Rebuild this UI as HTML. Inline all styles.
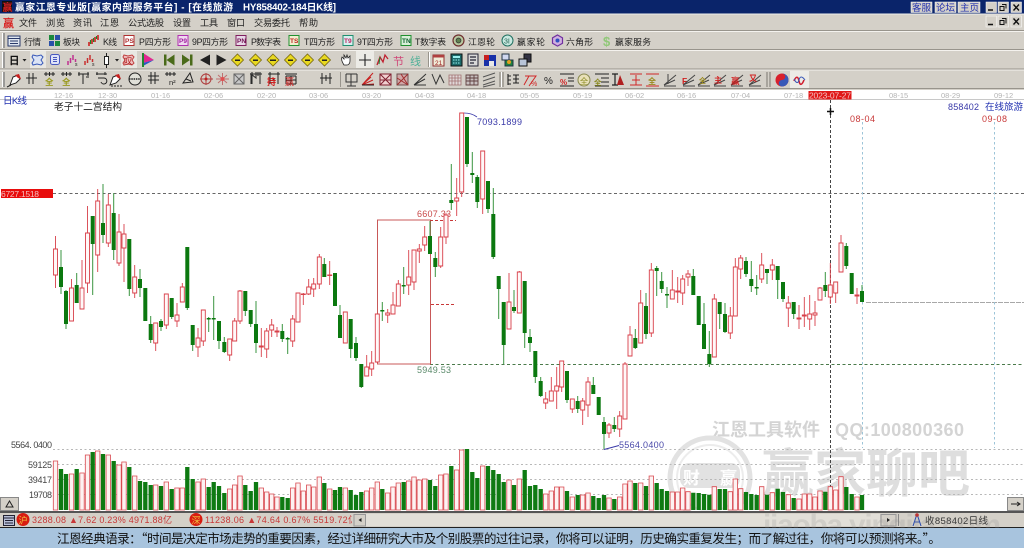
<!DOCTYPE html>
<html lang="zh"><head><meta charset="utf-8"><title>赢家江恩专业版</title>
<style>
html,body{margin:0;padding:0;background:#fff;width:1024px;height:548px;overflow:hidden}
svg{display:block;position:absolute;left:0;top:0;filter:blur(.3px)}
text{font-family:"Liberation Sans","WenQuanYi Zen Hei","Noto Sans CJK SC",sans-serif}
.m{font-size:9.2px;fill:#222}
.t{font-size:8.8px;fill:#222}
.a{font-size:7.5px;fill:#b4b4b4}
.l{font-size:9px;fill:#444}
.g{fill:none;stroke:#222;stroke-width:1}
</style></head><body>
<svg width="1024" height="548" viewBox="0 0 1024 548">
<!-- chrome backgrounds -->
<rect width="1024" height="90" fill="#d4d0c8"/>
<rect width="1024" height="13.5" fill="#0a246a"/>
<rect y="13.5" width="1024" height="1" fill="#eeeeea"/>
<path d="M0 30.5H1024M0 49.5H1024M0 69H1024M0 88.5H1024" stroke="#98948c" stroke-width="1"/>
<path d="M0 31.5H1024M0 50.5H1024M0 70H1024" stroke="#f4f2ee" stroke-width="1"/>
<rect y="90" width="1024" height="421" fill="#fff"/>
<!-- title -->
<rect x="2" y="1" width="10" height="11" fill="#111"/>
<text x="2.5" y="11" font-size="10" fill="#e02020" font-weight="bold">赢</text>
<text x="15" y="10.500" font-size="9.800" fill="#fff" font-weight="bold" textLength="218">赢家江恩专业版[赢家内部服务平台] - [在线旅游</text>
<text x="243" y="10.500" font-size="9.800" fill="#fff" font-weight="bold" textLength="93">HY858402-184日K线]</text>
<g fill="#d4d0c8" stroke="#fff" stroke-width=".5">
<rect x="911" y="2" width="21" height="10.500"/><rect x="935" y="2" width="21" height="10.500"/><rect x="958" y="2" width="22" height="10.500"/>
<rect x="986" y="2" width="10.500" height="10.500"/><rect x="998" y="2" width="10.500" height="10.500"/><rect x="1011" y="2" width="10.500" height="10.500"/>
<rect x="986" y="16" width="10.500" height="11"/><rect x="998" y="16" width="10.500" height="11"/><rect x="1011" y="16" width="10.500" height="11"/>
</g>
<text x="912" y="11" font-size="9.500" fill="#2030b0" textLength="19">客服</text>
<text x="936" y="11" font-size="9.500" fill="#2030b0" textLength="19">论坛</text>
<text x="960" y="11" font-size="9.500" fill="#2030b0" textLength="19">主页</text>
<path d="M988 10h5M988 24.500h5" stroke="#111" stroke-width="1.500"/>
<path d="M1002 4.500h4v4M1000 6.500h4v4h-4zM1002 18.500h4v5M1000 20.500h4v4h-4z" fill="none" stroke="#111"/>
<path d="M1013.500 4.500l5.500 6M1019 4.500l-5.500 6M1013.500 18.500l5.500 6M1019 18.500l-5.500 6" stroke="#111" stroke-width="1.400"/>
<!-- menu -->
<text x="3" y="27" font-size="11" fill="#d82020" font-weight="bold">赢</text>
<text class="m" x="19" y="26" textLength="18">文件</text>
<text class="m" x="46" y="26" textLength="19">浏览</text>
<text class="m" x="73" y="26" textLength="19">资讯</text>
<text class="m" x="100" y="26" textLength="19">江恩</text>
<text class="m" x="128" y="26" textLength="36">公式选股</text>
<text class="m" x="173" y="26" textLength="18">设置</text>
<text class="m" x="200" y="26" textLength="18">工具</text>
<text class="m" x="227" y="26" textLength="18">窗口</text>
<text class="m" x="254" y="26" textLength="36">交易委托</text>
<text class="m" x="299" y="26" textLength="19">帮助</text>
<!-- grips -->
<path d="M4 33v15M4 52v16M4 72v15M4 33" stroke="#888" stroke-width="1.500"/>
<path d="M2.500 33v15M2.500 52v16M2.500 72v15" stroke="#fff" stroke-width="1"/>
<!-- toolbar 1 -->
<rect x="8" y="36" width="12" height="10" fill="#dfe6f0" stroke="#2a3a6a"/><path d="M8 38.500h12M10 41h8M10 43.500h8" stroke="#2a3a6a"/>
<text class="t" x="24" y="45" textLength="17">行情</text>
<rect x="49" y="35" width="5" height="5" fill="#1c8a3c"/><rect x="55" y="35" width="5" height="5" fill="#2a50a8"/><rect x="49" y="41" width="5" height="5" fill="#2a50a8"/><rect x="55" y="41" width="5" height="5" fill="#1c8a3c"/>
<text class="t" x="63" y="45" textLength="17">板块</text>
<path d="M89 46v-4M92 44v-5M95 42v-5M98 40v-5" stroke="#d02020" stroke-width="1.600"/><path d="M90.500 44v-4M93.500 42v-4M96.500 39v-3" stroke="#1a8a2a" stroke-width="1.200"/>
<text class="t" x="103" y="45" textLength="14">K线</text>
<g font-size="6.500" font-weight="bold" stroke-width="1">
<rect x="124" y="35.500" width="10" height="10" fill="#fff" stroke="#b03030"/><text x="125" y="43" fill="#b03030">PS</text>
<rect x="178" y="35.500" width="10" height="10" fill="#f0d8f0" stroke="#b030b0"/><text x="179" y="43" fill="#a020a0">P9</text>
<rect x="236" y="35.500" width="10" height="10" fill="#e8d8e8" stroke="#802060"/><text x="237" y="43" fill="#701050">PN</text>
<rect x="289" y="35.500" width="10" height="10" fill="#f0f0d0" stroke="#209030"/><text x="290" y="43" fill="#c02020">TS</text>
<rect x="343" y="35.500" width="10" height="10" fill="#d8f0f0" stroke="#209070"/><text x="344" y="43" fill="#c02060">T9</text>
<rect x="401" y="35.500" width="10" height="10" fill="#d8f0d8" stroke="#209030"/><text x="402" y="43" fill="#106030">TN</text>
</g>
<text class="t" x="139" y="45" textLength="32">P四方形</text>
<text class="t" x="192" y="45" textLength="36">9P四方形</text>
<text class="t" x="251" y="45" textLength="30">P数字表</text>
<text class="t" x="304" y="45" textLength="31">T四方形</text>
<text class="t" x="357" y="45" textLength="36">9T四方形</text>
<text class="t" x="415" y="45" textLength="31">T数字表</text>
<circle cx="458.500" cy="40.500" r="5.500" fill="#b8c8a0" stroke="#703030" stroke-width="1.200"/><circle cx="458.500" cy="40.500" r="2.500" fill="#608050" stroke="#333" stroke-width=".7"/>
<text class="t" x="468" y="45" textLength="27">江恩轮</text>
<circle cx="507.500" cy="40.500" r="5.500" fill="#c8e8e0" stroke="#207060"/><text x="504" y="43.500" font-size="7" fill="#206050">3I</text>
<text class="t" x="517" y="45" textLength="28">赢家轮</text>
<path d="M557.500 35l5 2.800v5.500l-5 2.800-5-2.800v-5.500z" fill="#d0b0e0" stroke="#7030a0" stroke-width="1.200"/><circle cx="557.500" cy="40.500" r="2" fill="#3050c0"/>
<text class="t" x="566" y="45" textLength="27">六角形</text>
<text x="603" y="46" font-size="13" font-weight="bold" fill="#90c878">$</text>
<text class="t" x="615" y="45" textLength="36">赢家服务</text>
<!-- toolbar 2 -->
<text x="9" y="64" font-size="10.500" font-weight="bold" fill="#111">日</text>
<path d="M22.500 59h4l-2 2.500zM115 59h4l-2 2.500z" fill="#222"/>
<rect x="30" y="51" width="16" height="17" fill="#e8e7e2"/>
<path d="M33 55l4 1 4-1 2 2-2 3 2 3-2 2-4-1-4 1-1-2 2-3-2-3z" fill="#dbe4f5" stroke="#3858b8"/>
<rect x="50.500" y="54.500" width="9" height="10" rx="2" fill="#e0e4f8" stroke="#4858c0"/><path d="M53 57.500h4M53 59.500h4M53 61.500h4" stroke="#4858c0"/>
<path d="M68 65v-4M70.500 63v-5M73 60v-5M75.500 62v-3" stroke="#c03090" stroke-width="1.500"/><text x="75" y="66" font-size="5" fill="#222">s</text>
<path d="M85 65v-4M87.500 63v-5M90 60v-5M92.500 62v-3" stroke="#c83030" stroke-width="1.500"/><text x="92" y="66" font-size="5" fill="#222">s</text>
<path d="M106.500 53v15" stroke="#222"/><rect x="104.500" y="56.500" width="4" height="8" fill="#fff" stroke="#222"/>
<rect x="121" y="51" width="16" height="17" fill="#e8e7e2"/>
<path d="M124 55l4 1 4-1 2 2-2 3 2 3-2 2-4-1-4 1-1-2 2-3-2-3z" fill="#f0c0c0" stroke="#c04040"/><text x="124" y="64" font-size="8.500" fill="#b02020">叹</text>
<path d="M143 53l11 7-11 3z" fill="#e02890"/><path d="M143 63l11-3-11 6z" fill="#2858c8"/><path d="M143 53v14" stroke="#208830" stroke-width="2"/>
<g fill="#4a6a1a"><path d="M164 54.500h2.500v11H164zM166.500 60l8-5.500v11z"/><path d="M190 54.500h2.500v11H190zM190 60l-8-5.500v11z"/></g>
<g fill="#222"><path d="M210 54.500v11l-10-5.500z"/><path d="M216.500 54.500v11l10-5.500z"/></g>
<g fill="#e8d820" stroke="#786810" stroke-width=".8"><path d="M237.500 54l6 6-6 6-6-6z"/><path d="M255.500 54l6 6-6 6-6-6z"/><path d="M273 54l6 6-6 6-6-6z"/><path d="M290.500 54l6 6-6 6-6-6z"/><path d="M307.500 54l6 6-6 6-6-6z"/><path d="M324.500 54l6 6-6 6-6-6z"/></g>
<g fill="#222"><path d="M235 59.500h5v1.500h-5zM253 59.500h5v1.500h-5zM270 59.500h6v1.500h-6zM288 59.500h5v1.500h-5zM305 59.500h5v1.500h-5zM322 59.500h5v1.500h-5z"/></g>
<path d="M344 65c-2-3-3-6-2-8l2 2v-4l2 3 1-3 1 3 2-2v5c0 3-2 4-3 4z" fill="#fff" stroke="#222" stroke-width=".8"/>
<rect x="356" y="51" width="18" height="17" fill="#ecebe6"/>
<path d="M359 60h12M365 54v12" stroke="#222" stroke-width="1.100"/>
<path d="M377 65l3-8 3 5 2-7 3 4" fill="none" stroke="#c02030" stroke-width="1.300"/><path d="M380 57l-1 7" stroke="#208030"/>
<text x="393" y="65" font-size="11" fill="#d04878">节</text>
<text x="410" y="65" font-size="11" fill="#50b098">线</text>
<path d="M428.500 52v15" stroke="#98948c"/><path d="M429.500 52v15" stroke="#fff"/>
<rect x="433" y="55" width="11" height="11" fill="#f0ecd8" stroke="#903030"/><rect x="433" y="55" width="11" height="2.500" fill="#b04040"/><text x="435" y="65" font-size="6.500" fill="#a02020">21</text>
<rect x="451" y="54" width="11" height="12" fill="#1c6a6a" stroke="#111"/><path d="M453 57h7" stroke="#9ee" stroke-width="2"/><path d="M453 60h7M453 63h7" stroke="#9ee" stroke-dasharray="1.500 1"/>
<rect x="468" y="54" width="10" height="12" fill="#d8d8d8" stroke="#223"/><path d="M470 57h6M470 60h6M470 63h4" stroke="#223" stroke-width="1.200"/>
<rect x="484" y="55" width="12" height="11" fill="#1830a8"/><rect x="484" y="55" width="5" height="5" fill="#c82020"/><rect x="489" y="61" width="5" height="5" fill="#e8e8e8"/>
<rect x="502" y="54" width="7" height="6" fill="#d0d8f0" stroke="#234"/><rect x="505" y="60" width="8" height="6" fill="#208040" stroke="#234"/><circle cx="509" cy="62" r="2" fill="#e0a020"/>
<rect x="524" y="54" width="7" height="8" fill="#334" stroke="#111"/><rect x="519" y="59" width="8" height="7" fill="#b8c4d8" stroke="#111"/>
<!-- toolbar 3 -->
<path d="M10 85l3-8 5-2 2 4-4 4z" fill="#fff" stroke="#222"/><path d="M15 75l4-1 2 5-3-1z" fill="#c82020"/><path d="M7 87l4-2" stroke="#222"/>
<g class="g">
<path d="M26 78h11M29 73v11M33 73v11"/>
<path d="M44 74h11M46 72v4M49.500 72v4M53 72v4"/><path d="M61 74h11M63 72v4M66.500 72v4M70 72v4"/>
<path d="M78 74h11M83 74v10M86 77h3M79 72v4M88 72v4"/>
<path d="M96 74h11M97 72v3M105 72v3M98 78h6a3 3 0 1 1-3 4"/>
<path d="M130 80h7"/>
<path d="M148 76h11M151 72v12M155 72v12M148 80h11"/>
<path d="M165 74h11M167 72v4M170 72v4M174 72v4"/>
<path d="M183 83l7-10 3 9zM186 79l5 2"/>
<path d="M250 74h12M252 72v4M256 72v4M260 72v4M252 76v8M260 76v8"/>
<path d="M268 74h12M270 72v12M278 72v12M274 78v6"/>
<path d="M285 74h12M286 76h10M286 76v8M296 76v8M291 76v8M286 80h10M286 84h10"/>
<path d="M320 78h12M322 73v11M330 73v11M326 75v6"/>
</g>
<text x="45" y="85" font-size="8.500" fill="#9a9a20" font-weight="bold">全</text>
<text x="62" y="85" font-size="8.500" fill="#9a9a20" font-weight="bold">全</text>
<text x="169" y="85" font-size="7.500" fill="#222">n²</text>
<path d="M110 85l3-8 5-2 2 4-4 4z" fill="#fff" stroke="#222"/><path d="M115 75l4-1 2 5-3-1z" fill="#c82020"/><path d="M111 86h12" stroke="#222" stroke-dasharray="2 1"/>
<circle cx="135" cy="79" r="6" fill="#e0e0d8" stroke="#222"/><path d="M129 79h12" stroke="#222" stroke-width="1.500" stroke-dasharray="1.500 .8"/>
<circle cx="206" cy="79" r="5" fill="none" stroke="#b04040"/><path d="M200 79h13M206 73v12" stroke="#b04040"/><circle cx="206" cy="79" r="1.500" fill="#c02020"/>
<path d="M216 79h13M222.500 73v12M218 75l9 8M227 75l-9 8" stroke="#c07070"/><circle cx="222.500" cy="79" r="2" fill="#e05050"/>
<rect x="234" y="74" width="10" height="10" fill="#c8c8c8" stroke="#666"/><path d="M234 74l10 10M244 74l-10 10" stroke="#666"/>
<path d="M251 84v-10l5 4v-5M258 72v4M260 72v4" fill="none" stroke="#333" stroke-width="1.100"/>
<text x="267" y="85" font-size="9" fill="#d02020" font-weight="bold">持</text>
<text x="285" y="85" font-size="9" fill="#d02020">赢</text>
<!-- group 2 -->
<path d="M340.500 72v15" stroke="#98948c"/>
<path d="M346 74h11M346 74v8h11v-8M351 74v12M347 86h9" fill="none" stroke="#333"/>
<path d="M362 85l11-12M362 85l9-8M362 85l11-5M362 85l12-1" stroke="#c82020"/><path d="M362 85h12" stroke="#222"/>
<rect x="380" y="74" width="11" height="11" fill="#f0d0d0" stroke="#802030"/><path d="M380 74l11 11M391 74l-11 11M380 80h11" stroke="#802030"/>
<rect x="397" y="74" width="11" height="11" fill="#d0a8a8" stroke="#705050"/><path d="M397 78l11 7M401 74l7 11M397 85l11-11" stroke="#a03030"/>
<path d="M414 85l12-11M414 85l11-6M414 85h12" stroke="#333" fill="none"/>
<path d="M432 74l4 10 4-9 4 8" stroke="#333" fill="none"/>
<path d="M449 75h12v10h-12zM449 78h12M449 81h12M452 75v10M455 75v10M458 75v10" fill="#e0d8d8" stroke="#a07070" stroke-width=".8"/>
<path d="M466 75h12v10h-12zM466 78h12M466 81h12M470 75v10M474 75v10" fill="#c8c0c0" stroke="#604040" stroke-width=".9"/>
<path d="M483 77l12-4M483 81l12-4M483 85l12-4M483 87l12-3" stroke="#555"/>
<path d="M500 72v15" stroke="#8a867e" stroke-width="1.200"/><path d="M503 72v15" stroke="#8a867e" stroke-width="1.200"/>
<path d="M501.500 72v15" stroke="#fff"/>
<path d="M508 74v11M508 76h3M508 80h3M508 84h3M513 75h6M513 79h6M513 83h6M516 75v8" stroke="#222" stroke-width="1.100" fill="none"/>
<path d="M525 76h11l-7 10M524 85l5-9" stroke="#d02828" fill="none"/><text x="531" y="86" font-size="7" fill="#d02828">%</text>
<text x="544" y="84" font-size="10" fill="#222">%</text>
<path d="M560 74h14M560 86h14" stroke="#222"/><text x="560" y="85" font-size="8" fill="#d02828" font-weight="bold">%</text><path d="M568 78h6M568 81h6" stroke="#222"/>
<circle cx="584" cy="80" r="6" fill="#e8e0b8" stroke="#8a8a50"/><text x="580" y="84" font-size="8" fill="#8a8a20">全</text>
<path d="M595 74h14M601 78h8M601 82h8M595 86h14" stroke="#222"/><text x="594" y="85" font-size="7.500" fill="#8a8a20" font-weight="bold">全</text>
<path d="M615 74v11M612 74h6M612 85h6" stroke="#222" stroke-width="1.200"/><path d="M620 75l4 10h-7z" fill="#b02020"/>
<path d="M630 74h12M630 85h12M632 80h8M636 75v10" stroke="#d02828"/><path d="M630 85h12" stroke="#d02828"/>
<path d="M646 74h13M646 86h13" stroke="#d02828"/><text x="648" y="84" font-size="8" fill="#9a8a20" font-weight="bold">全</text>
<path d="M664 85l12-10M664 85l11-5M664 86h12M668 74v10" stroke="#444" fill="none"/>
<text x="682" y="84" font-size="8.500" fill="#d02020" font-weight="bold">F</text><path d="M683 85l12-10M683 85l11-5M683 86h12" stroke="#444" fill="none"/>
<path d="M698 85l12-10M698 85l11-5M698 86h12" stroke="#444" fill="none"/><text x="699" y="83" font-size="7" fill="#9a8a20" font-weight="bold">全</text>
<path d="M714 85l12-10M714 85l11-5M714 86h12" stroke="#444" fill="none"/><text x="714" y="83" font-size="8" fill="#d02020" font-weight="bold">主</text>
<path d="M731 85l12-10M731 85l11-5M731 86h12" stroke="#444" fill="none"/><text x="731" y="84" font-size="8.500" fill="#d02020" font-weight="bold">赢</text>
<path d="M749 85l12-10M749 85l11-5M749 86h12" stroke="#444" fill="none"/><text x="749" y="81" font-size="8" fill="#d02020" font-weight="bold">又</text>
<path d="M767 72v15M770 72v15" stroke="#8a867e" stroke-width="1.200"/>
<rect x="790" y="71" width="19" height="17" fill="#ecebe6"/>
<circle cx="782" cy="80" r="6.500" fill="#d8202c"/><path d="M782 73.500a3.200 3.200 0 0 1 0 6.500 3.200 3.200 0 0 0 0 6.500 6.500 6.500 0 0 0 0-13z" fill="#3858b8"/>
<path d="M794 81c2-5 4-5 5 0s3 4 5-1" fill="none" stroke="#d02030" stroke-width="1.600"/><path d="M794 79c2 4 4 5 5 1s3-4 6 0" fill="none" stroke="#3858b8" stroke-width="1"/>
<!-- axis -->
<path d="M0 99.500H1024" stroke="#c8c8c8"/>
<g class="a">
<text class="a" x="54" y="98">12-16</text><text class="a" x="98" y="98">12-30</text><text class="a" x="151" y="98">01-16</text><text class="a" x="204" y="98">02-06</text><text class="a" x="257" y="98">02-20</text><text class="a" x="309" y="98">03-06</text><text class="a" x="362" y="98">03-20</text><text class="a" x="415" y="98">04-03</text><text class="a" x="467" y="98">04-18</text><text class="a" x="520" y="98">05-05</text><text class="a" x="573" y="98">05-19</text><text class="a" x="625" y="98">06-02</text><text class="a" x="677" y="98">06-16</text><text class="a" x="731" y="98">07-04</text><text class="a" x="784" y="98">07-18</text><text class="a" x="889" y="98">08-15</text><text class="a" x="941" y="98">08-29</text><text class="a" x="994" y="98">09-12</text>
</g>
<rect x="808.500" y="91" width="43" height="8.500" fill="#e01818"/>
<text x="809" y="98.500" font-size="8.500" fill="#f4c0c0" textLength="42">2023-07-27</text>
<text x="3" y="104" font-size="9.500" fill="#2030b0" textLength="24">日K线</text>
<text x="54" y="110" font-size="9.700" fill="#222" textLength="68">老子十二宫结构</text>
<text x="948" y="110" font-size="9" fill="#3838a8" textLength="31">858402</text>
<text x="985" y="110" font-size="9.500" fill="#2030b0" textLength="38">在线旅游</text>
<text x="850" y="122" font-size="9" fill="#c83838" textLength="25">08-04</text>
<text x="982" y="122" font-size="9" fill="#c83838" textLength="25">09-08</text>
<!-- watermark -->
<text x="712" y="436" font-size="18" font-weight="bold" fill="#d4d4d4" textLength="108">江恩工具软件</text>
<text x="835" y="436" font-size="18" font-weight="bold" fill="#d4d4d4" textLength="129">QQ:100800360</text>
<circle cx="710" cy="478" r="40" fill="none" stroke="#e2e2e2" stroke-width="5"/><circle cx="710" cy="478" r="33" fill="none" stroke="#ececec" stroke-width="2"/>
<rect x="680" y="463" width="60" height="25" rx="9" fill="#e2e2e2"/>
<text x="683" y="484" font-size="17" font-weight="bold" fill="#fff" textLength="54">财赢</text>
<text x="762" y="492" font-size="52" font-weight="bold" fill="#dedede" textLength="208">赢家聊吧</text>
<!-- guide lines -->
<path d="M53 193.500H1024" stroke="#666" stroke-dasharray="3 2.500"/>
<path d="M430 364.500H1024" stroke="#4a7a4a" stroke-dasharray="3 2.500"/>
<path d="M866 302.500H1024" stroke="#a8a8a8" stroke-dasharray="5 1"/>
<path d="M53 449.500H1024M53 464.500H1024M53 479.500H1024M53 494.500H1024" stroke="#b8b8b8" stroke-dasharray="2 2.500"/>
<path d="M862.500 122V448M994.500 122V448" stroke="#9cc4d8" stroke-dasharray="2.500 2.500"/>
<path d="M830.500 100V510" stroke="#444" stroke-dasharray="3 2"/>
<path d="M827 111.500h7M830.500 108v7" stroke="#111" stroke-width="1.500"/>
<rect x="1" y="189" width="52" height="9" fill="#e80c0c"/>
<text x="1" y="197" font-size="8.500" fill="#f4c0c0" textLength="38">6727.1518</text>
<!-- structure box -->
<rect x="377.500" y="220" width="53" height="144" fill="none" stroke="#c85858"/>
<path d="M430 220.500h26M431 304.500h25" stroke="#c83838" stroke-dasharray="3 2"/>
<text x="417" y="217" font-size="9" fill="#c84848" textLength="34">6607.33</text>
<text x="417" y="373" font-size="9" fill="#5a8a6a" textLength="34">5949.53</text>
<path d="M464 113c5 0 9 1 13 4" fill="none" stroke="#3838a8" stroke-width=".8"/>
<text x="477" y="125" font-size="9" fill="#3838a8" textLength="45">7093.1899</text>
<path d="M604 449.500l15-4" fill="none" stroke="#3838a8"/>
<text x="619" y="448" font-size="9" fill="#4848a8" textLength="45">5564.0400</text>
<!-- left labels -->
<text class="l" x="11" y="448" textLength="41">5564. 0400</text>
<text class="l" x="28" y="468" textLength="24">59125</text>
<text class="l" x="28" y="483" textLength="24">39417</text>
<text class="l" x="29" y="498" textLength="23">19708</text>
<!-- volume red -->
<path fill="#fdf2f2" stroke="#d8484f" stroke-width=".8" d="M53.300 461h4.400V510h-4.400zM69.300 474h4.400V510h-4.400zM79.800 473h4.400V510h-4.400zM85.300 455h4.400V510h-4.400zM95.500 451h4.400V510h-4.400zM106.100 455h4.400V510h-4.400zM116.800 465h4.400V510h-4.400zM121.800 462h4.400V510h-4.400zM132.500 476h4.400V510h-4.400zM153.500 485h4.400V510h-4.400zM164.100 482h4.400V510h-4.400zM174.800 488h4.400V510h-4.400zM180.100 488h4.400V510h-4.400zM195.800 482h4.400V510h-4.400zM201.100 479h4.400V510h-4.400zM227.500 489h4.400V510h-4.400zM232.500 485h4.400V510h-4.400zM237.800 476h4.400V510h-4.400zM259.100 488h4.400V510h-4.400zM264.500 492h4.400V510h-4.400zM269.500 494h4.400V510h-4.400zM274.800 497h4.400V510h-4.400zM290.500 488h4.400V510h-4.400zM295.800 483h4.400V510h-4.400zM301.100 491h4.400V510h-4.400zM306.500 485h4.400V510h-4.400zM311.500 487h4.400V510h-4.400zM317.100 477h4.400V510h-4.400zM327.500 489h4.400V510h-4.400zM343.100 488h4.400V510h-4.400zM364.500 491h4.400V510h-4.400zM369.500 488h4.400V510h-4.400zM375.100 482h4.400V510h-4.400zM385.500 493h4.400V510h-4.400zM390.800 487h4.400V510h-4.400zM396.100 483h4.400V510h-4.400zM406.500 481h4.400V510h-4.400zM411.800 477h4.400V510h-4.400zM417.100 480h4.400V510h-4.400zM422.500 479h4.400V510h-4.400zM438.500 475h4.400V510h-4.400zM443.800 474h4.400V510h-4.400zM454.500 470h4.400V510h-4.400zM459.500 450h4.400V510h-4.400zM480.500 466h4.400V510h-4.400zM506.800 480h4.400V510h-4.400zM517.100 479h4.400V510h-4.400zM543.500 494h4.400V510h-4.400zM549.100 491h4.400V510h-4.400zM554.500 487h4.400V510h-4.400zM559.500 487h4.400V510h-4.400zM570.100 497h4.400V510h-4.400zM580.500 495h4.400V510h-4.400zM585.800 493h4.400V510h-4.400zM606.800 498h4.400V510h-4.400zM617.500 497h4.400V510h-4.400zM622.800 484h4.400V510h-4.400zM627.800 481h4.400V510h-4.400zM638.500 483h4.400V510h-4.400zM649.100 476h4.400V510h-4.400zM670.100 492h4.400V510h-4.400zM675.500 492h4.400V510h-4.400zM680.500 488h4.400V510h-4.400zM685.800 491.700h4.400V510h-4.400zM712.100 486.700h4.400V510h-4.400zM728.100 491.700h4.400V510h-4.400zM733.100 479h4.400V510h-4.400zM738.500 488.700h4.400V510h-4.400zM759.500 486.700h4.400V510h-4.400zM770.100 492.700h4.400V510h-4.400zM786.100 494.700h4.400V510h-4.400zM796.800 499h4.400V510h-4.400zM802.100 494h4.400V510h-4.400zM807.500 494h4.400V510h-4.400zM812.800 497h4.400V510h-4.400zM817.800 491h4.400V510h-4.400zM828.100 486.700h4.400V510h-4.400zM833.500 490h4.400V510h-4.400zM838.800 476.700h4.400V510h-4.400zM854.800 497h4.400V510h-4.400z"/>
<!-- volume green -->
<path fill="none" stroke="#0e7a12" stroke-width="4.300" d="M61 469V510M66 474V510M76.700 469V510M92.700 452V510M103 454V510M113.700 461V510M129.300 467V510M140 481V510M145.300 482V510M150.700 485V510M161 486V510M171.700 489V510M187.300 467V510M192.700 479V510M208.700 487V510M213.700 482V510M219 486V510M224.300 493V510M245.300 485V510M250.700 491V510M256 482V510M282.300 497V510M287.700 498V510M324.300 483V510M335 490V510M340 487V510M350.700 490V510M356 495V510M361.300 492V510M382.300 489V510M403.700 482V510M430 480V510M435.300 486V510M451.300 466V510M467 449V510M472.300 472V510M477.300 478V510M488 466V510M493.300 470V510M498.700 474V510M503.700 482V510M514 485V510M524.700 470V510M530 486V510M535.300 485V510M540.700 489V510M567 491V510M577.700 495V510M593.300 496V510M598.700 498V510M604 495V510M614.300 499V510M635.300 483V510M646 486V510M656.700 483V510M661.700 489V510M667 491V510M693.300 492.700V510M698.700 493V510M704 494V510M709.300 494.700V510M719.700 489V510M725 489V510M746 492V510M751.300 494V510M756.700 495V510M767 494.700V510M777.700 488.700V510M783 492V510M793.700 498V510M825.300 491.700V510M846.300 487V510M851.700 494V510M862 495V510"/>
<!-- candles: green -->
<path fill="none" stroke="#3a9440" d="M61 250V294M66 290V329M76.700 273V303M92.700 216V295M103 184V243M113.700 193V260M129.300 239V296M140 269V297M150.700 316V343M161 319V331M171.700 298V319M187.300 247V310M192.700 325V351M208.700 317V332M213.700 296V340M219 321V349M224.300 337V353M245.300 291V316M250.700 310V327M256 301V353M282.300 324V342M287.700 337V354M324.300 258V277M340 305V338M350.700 319V358M356 337V361M361.300 364V388M382.300 302V321M403.700 267V294M430 221V254M435.300 252V277M451.300 164V210M467 117V167M472.300 152V183M477.300 175V208M488 181V213M493.300 188V259M498.700 276V319M503.700 302V364M514 290V313M524.700 281V348M530 329V352M535.300 351V383M540.700 377V397M567 371V403M577.700 396V413M593.300 377V394M598.700 397V415M604 417V449M614.300 417V432M635.300 329V349M646 293V339M656.700 266V296M661.700 272V293M667 287V308M693.300 269V295M698.700 296V325M704 303V349M709.300 331V367M719.700 302V329M725 303V333M746 257V277M751.300 261V292M756.700 275V295M767 269V284M777.700 266V299M783 282V302M793.700 302V319M825.300 272V297M846.300 243V269M851.700 273V294M862 285V302"/>
<path fill="none" stroke="#0b780f" stroke-width="4" d="M61 267V287M66 291V324M76.700 285V303M92.700 216V244M103 223V235M113.700 213V250M129.300 239V289M140 279V288M145.300 288V321M150.700 324V340M161 321V327M171.700 298V317M187.300 247V308M192.700 325V345M208.700 318V319.500M213.700 318V319.500M219 321V341M224.300 342V352M245.300 291V311M250.700 310V324M256 324V343M282.300 331V339M287.700 338V339.500M324.300 264V277M335 273V306M340 315V338M350.700 319V349M356 343V358M361.300 364V387M382.300 310V311.500M403.700 285V286.500M430 236V254M435.300 258V267M451.300 200V203M467 117V164M472.300 173V175M477.300 177V202M488 181V209M493.300 214V257M498.700 276V289M503.700 302V345M514 307V311M524.700 281V333M530 337V343M535.300 351V377M540.700 381V396M567 371V400M577.700 401V409M593.300 385V394M598.700 397V415M604 422V434M614.300 425V429M635.300 338V348M646 306V334M656.700 268V271M661.700 281V289M667 294V295.500M693.300 276V295M698.700 296V325M704 324V349M709.300 354V364M719.700 302V314M725 314V332M746 261V274M751.300 279V286M756.700 287V288.500M767 269V273M777.700 266V280M783 282V299M793.700 302V314M825.300 285V291M846.300 246V266M851.700 273V294M862 291V302"/>
<!-- candles: red wicks -->
<path fill="none" stroke="#d8404a" stroke-width=".9" d="M55.500 236V288M71.500 279V321M82 260V309M87.500 206V293M97.700 189V272M108.300 194V247M119 214V266M124 224V282M134.700 265V298M155.700 323V351M166.300 294V329M177 303V327M182.300 283V302M198 328V357M203.300 310V346M229.700 339V361M234.700 318V341M240 290V324M261.300 328V357M266.700 328V358M271.700 319V337M277 327V337M292.700 315V347M298 293V322M303.300 293V305M308.700 279V295M313.700 278V297M319.300 254V289M329.700 261V285M345.300 312V343M366.700 355V376M371.700 351V376M377.300 314V363M387.700 309V323M393 292V314M398.300 280V306M408.700 250V295M414 250V290M419.300 244V263M424.700 226V251M440.700 227V268M446 213V244M456.700 178V216M461.700 113V197M482.700 151V214M509 273V329M519.300 271V313M545.700 392V409M551.300 377V401M556.700 367V409M561.700 361V392M572.300 399V413M582.700 398V425M588 377V417M609 423V438M619.700 411V437M625 362V419M630 326V356M640.700 290V343M651.300 263V337M672.300 270V299M677.700 277V303M682.700 275V305M688 270V286M714.300 294V357M730.300 307V339M735.300 258V316M740.700 255V279M761.700 253V283M772.300 259V280M788.300 296V327M799 305V329M804.300 297V327M809.700 295V330M815 301V326M820 287V300M830.300 263V304M835.700 282V303M841 235V272M857 288V304"/>
<!-- candles: red bodies -->
<path fill="#fff8f8" stroke="#d8404a" stroke-width=".9" d="M53.500 249h4V275h-4zM69.500 288h4V321h-4zM80 288h4V309h-4zM85.500 233h4V283h-4zM95.700 201h4V255h-4zM106.300 205h4V243h-4zM117 232h4V263h-4zM122 234h4V248h-4zM132.700 277h4V293h-4zM153.700 323h4V343h-4zM164.300 294h4V325h-4zM175 315h4V321h-4zM180.300 287h4V302h-4zM196 338h4V347h-4zM201.300 310h4V341h-4zM227.700 339h4V355h-4zM232.700 321h4V341h-4zM238 291h4V321h-4zM259.300 346h4V347h-4zM264.700 331h4V349h-4zM269.700 325h4V330h-4zM275 331h4V332h-4zM290.700 319h4V341h-4zM296 293h4V322h-4zM301.300 294h4V294.500h-4zM306.700 287h4V294h-4zM311.700 284h4V289h-4zM317.300 257h4V284h-4zM327.700 275h4V275.500h-4zM343.300 312h4V343h-4zM364.700 367h4V376h-4zM369.700 363h4V369h-4zM375.300 314h4V362h-4zM385.700 313h4V315h-4zM391 305h4V314h-4zM396.300 284h4V306h-4zM406.700 277h4V285h-4zM412 250h4V282h-4zM417.300 249h4V251h-4zM422.700 237h4V245h-4zM438.700 237h4V266h-4zM444 215h4V237h-4zM454.700 198h4V201h-4zM459.700 113h4V192h-4zM480.700 151h4V199h-4zM507 302h4V329h-4zM517.300 272h4V313h-4zM543.700 399h4V403h-4zM549.300 391h4V401h-4zM554.700 386h4V391h-4zM559.700 361h4V387h-4zM570.300 399h4V409h-4zM580.700 401h4V410h-4zM586 382h4V405h-4zM607 425h4V433h-4zM617.700 416h4V429h-4zM623 364h4V419h-4zM628 335h4V356h-4zM638.700 303h4V343h-4zM649.300 270h4V333h-4zM670.300 290h4V299h-4zM675.700 291h4V292h-4zM680.700 279h4V293h-4zM686 274h4V277h-4zM712.300 299h4V357h-4zM728.300 316h4V333h-4zM733.300 267h4V316h-4zM738.700 258h4V269h-4zM759.700 265h4V279h-4zM770.300 265h4V270h-4zM786.300 303h4V308h-4zM797 318h4V319h-4zM802.300 315h4V316h-4zM807.700 314h4V319h-4zM813 313h4V315h-4zM818 288h4V300h-4zM828.300 285h4V297h-4zM833.700 282h4V293h-4zM839 243h4V272h-4zM855 295h4V296h-4z"/>
<!-- bottom buttons -->
<rect x="0.500" y="497.500" width="18" height="13" fill="#d4d0c8" stroke="#888"/>
<path d="M6 507l3.500-6 3.500 6z" fill="none" stroke="#222"/>
<rect x="1007.500" y="497.500" width="16" height="13" fill="#d4d0c8" stroke="#888"/>
<path d="M1011 504h9M1017 502l3 2-3 2" fill="none" stroke="#222"/>
<!-- status bar -->
<rect y="511" width="1024" height="2" fill="#555"/>
<rect y="513" width="1024" height="14" fill="#d4d0c8"/>
<rect y="527" width="1024" height="1" fill="#222"/>
<rect x="3.500" y="515.500" width="11" height="10" fill="#b8c0d8" stroke="#223"/><path d="M3.500 518h11M5 520.500h8M5 523h8" stroke="#223" stroke-width=".9"/>
<circle cx="23" cy="519.500" r="6.500" fill="#d81c10"/><text x="18.500" y="523.500" font-size="9" fill="#f0c040">沪</text>
<text x="32" y="523" font-size="9" fill="#c83838" textLength="140">3288.08 ▲7.62 0.23% 4971.88亿</text>
<circle cx="196" cy="519.500" r="6.500" fill="#d81c10"/><text x="191.500" y="523.500" font-size="9" fill="#f0c040">深</text>
<text x="205" y="523" font-size="9" fill="#c83838" textLength="152">11238.06 ▲74.64 0.67% 5519.72亿</text>
<rect x="352" y="513" width="3" height="14" fill="#d4d0c8"/>
<rect x="366" y="514" width="514" height="12" fill="#e2dfd8"/>
<rect x="354" y="514.500" width="11.500" height="11.500" fill="#d4d0c8" stroke="#999"/>
<path d="M361.500 518v4l-3-2z" fill="#222"/>
<rect x="881" y="514.500" width="15" height="11.500" fill="#d4d0c8" stroke="#999"/>
<path d="M887 518v4l3-2z" fill="#222"/>
<path d="M898.500 514v12" stroke="#888"/>
<path d="M917 514l-4 12M917 514l4 12M914.500 522h5" stroke="#3050b0" stroke-width="1.100" fill="none"/><circle cx="917" cy="515" r="1.800" fill="#c82020"/>
<text x="925" y="524" font-size="9.500" fill="#333" textLength="63">收858402日线</text>
<text x="763" y="535" font-size="30" font-weight="bold" fill="#8a8a8a" fill-opacity=".2" textLength="238">jiaoba.yingjia.com</text>
<!-- quote bar -->
<rect y="528" width="1024" height="20" fill="#a8c4de"/>
<text x="57" y="543" font-size="12.600" fill="#111" textLength="884" style="font-family:'WenQuanYi Zen Hei','Noto Sans CJK SC',sans-serif">江恩经典语录：“时间是决定市场走势的重要因素，经过详细研究大市及个别股票的过往记录，你将可以证明，历史确实重复发生；而了解过往，你将可以预测将来。”。</text>
</svg>
</body></html>
